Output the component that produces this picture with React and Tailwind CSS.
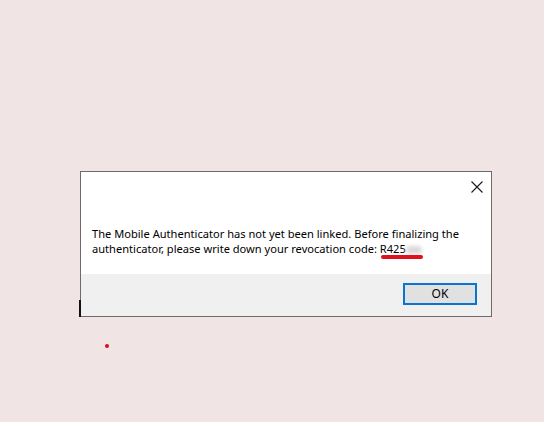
import React from "react";

const CloseIcon = () => (
  <svg width="12" height="12" viewBox="0 0 12 12" className="block">
    <path d="M0.5 0.5 L11.5 11.5 M11.5 0.5 L0.5 11.5" stroke="#1a1a1a" strokeWidth="1.1" fill="none" />
  </svg>
);

const App = () => {
  return (
    <div className="relative w-[544px] h-[422px] overflow-hidden bg-[#f1e4e4] pt-[171px] pl-[80px]" style={{ fontFamily: '"Noto Sans", "Open Sans", sans-serif' }}>
      <div className="relative w-[412px] h-[146px] flex flex-col border border-[#6e6a6a] bg-white">
        <div className="h-[102px] flex flex-col">
          <div className="flex justify-end pt-[9px] pr-[8px]">
            <CloseIcon />
          </div>
          <p className="mt-[33px] ml-[11px] text-[11.1px] leading-[15px] text-black">
            The Mobile Authenticator has not yet been linked. Before finalizing the
            <br />
            authenticator, please write down your revocation code:{" "}
            <span className="relative">
              R425
              <span className="inline-block w-[16px] h-[8px] align-middle rounded-full bg-[#d8d8d8] blur-[2px]" />
              <span className="absolute left-[1px] top-[14px] w-[42px] h-[4px] rounded-full bg-[#e0101c]" />
            </span>
          </p>
        </div>
        <div className="flex-1 bg-[#f0f0f0] flex justify-end items-start pt-[9px] pr-[14px]">
          <button className="w-[74px] h-[22px] border-2 border-[#0a74d0] bg-[#e1e1e1] text-[12px] leading-none text-black flex items-center justify-center">
            OK
          </button>
        </div>
        <div className="absolute left-[-2px] bottom-[-1px] w-[2px] h-[17px] bg-[#111]" />
      </div>
      <div className="absolute left-[105px] top-[344px] w-[4px] h-[4px] rounded-full bg-[#d4101e]" />
    </div>
  );
};

export default App;
